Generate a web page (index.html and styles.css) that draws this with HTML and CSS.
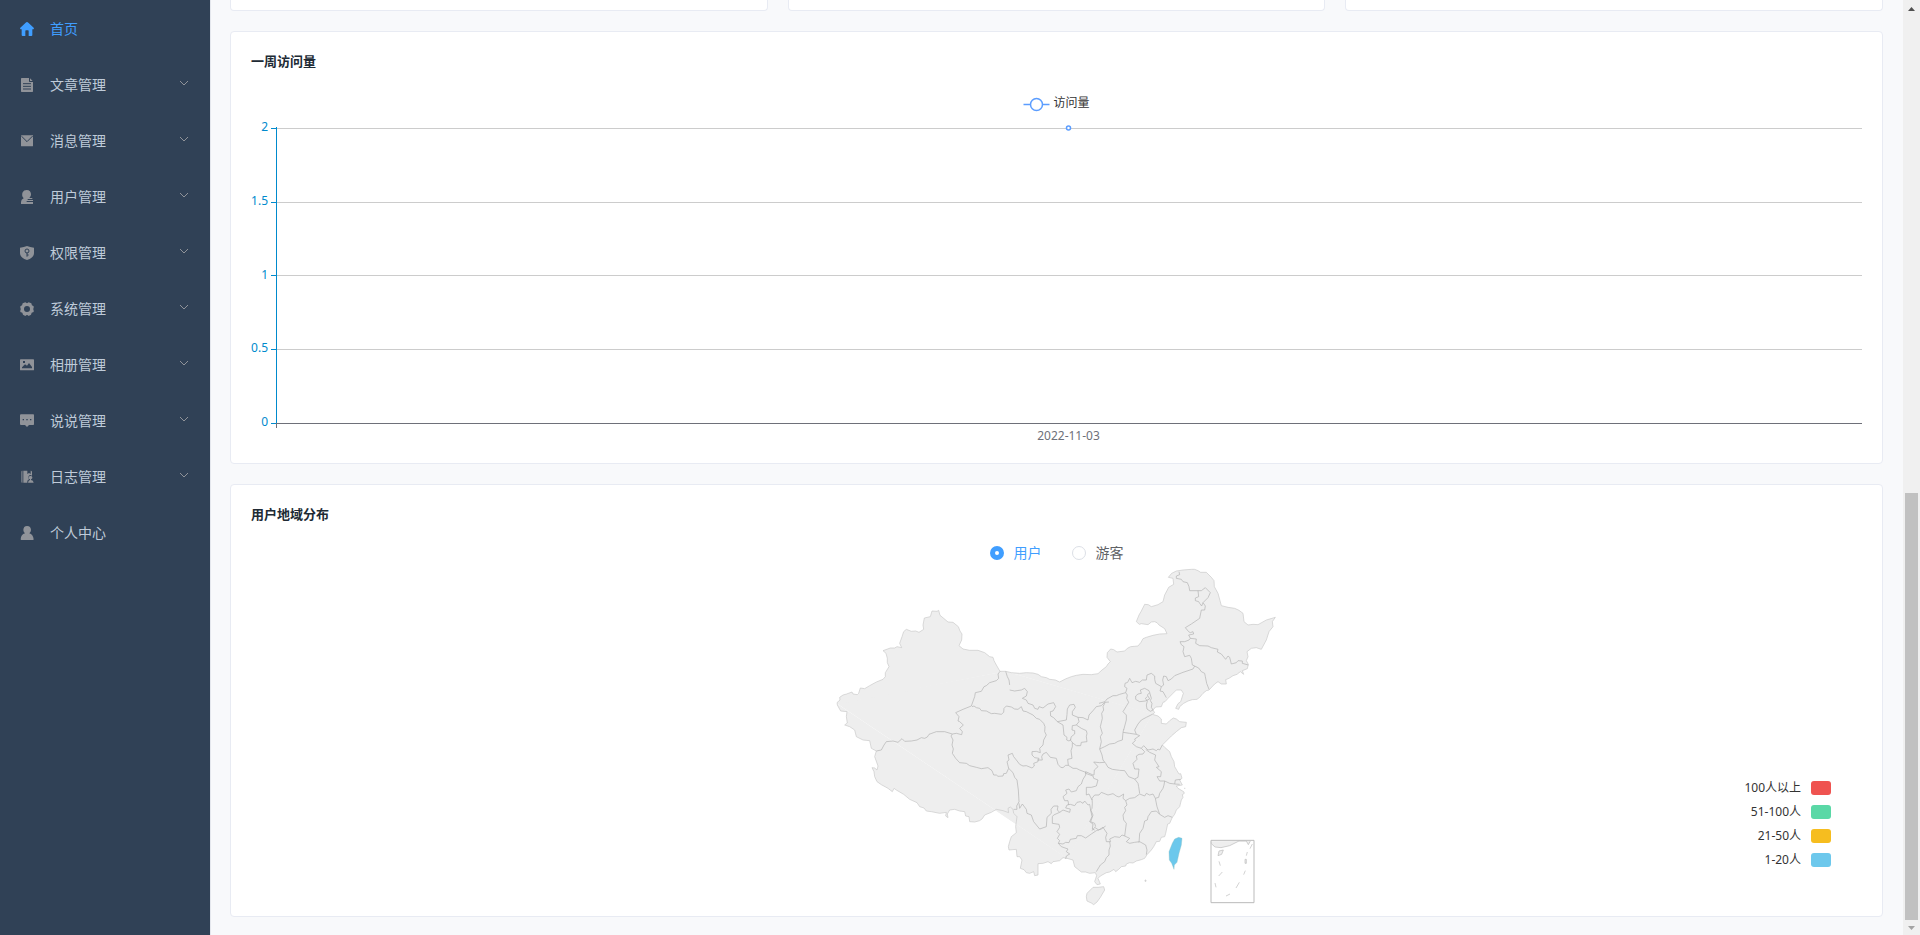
FILE: index.html
```html
<!DOCTYPE html>
<html lang="zh-CN">
<head>
<meta charset="utf-8">
<title>首页</title>
<link rel="stylesheet" href="styles.css">
</head>
<body>
<div class="app">
  <nav class="sidebar">
    <a class="item active" href="#"><svg class="icon" viewBox="0 0 42 42"><path d="M21 0Q23 0 25 2L41 17Q43 20 40 22H37V39Q37 42 34 42H26V27Q26 25 24 25H18Q16 25 16 27V42H8Q5 42 5 39V22H2Q-1 20 1 17L17 2Q19 0 21 0Z"/></svg><span>首页</span></a>
    <a class="item" href="#"><svg class="icon" viewBox="0 0 42 42"><path d="M5 0H27V10Q27 12 29 12H39V40Q39 42 37 42H5Q3 42 3 40V2Q3 0 5 0ZM30 1L38 9H30Z"/><path class="cut" d="M9 17H33M9 25H33M9 33H33"/></svg><span>文章管理</span><svg class="arrow" viewBox="0 0 10 6"><path d="M1 1L5 5L9 1"/></svg></a>
    <a class="item" href="#"><svg class="icon" viewBox="0 0 42 42"><path d="M3 4H39V35Q39 37 37 37H5Q3 37 3 35Z"/><path class="cut" d="M4 6L21 23L38 6"/></svg><span>消息管理</span><svg class="arrow" viewBox="0 0 10 6"><path d="M1 1L5 5L9 1"/></svg></a>
    <a class="item" href="#"><svg class="icon" viewBox="0 0 42 42"><path d="M20 0C29 0 33 6 33 13C33 18 30 22 28 24H37V27H24V30H39V33H21V36H39V42H3V36Q3 28 11 25C5 19 6 12 8 7Q11 0 20 0Z"/><path class="cut" d="M23 28.5H39M20 34.5H39"/></svg><span>用户管理</span><svg class="arrow" viewBox="0 0 10 6"><path d="M1 1L5 5L9 1"/></svg></a>
    <a class="item" href="#"><svg class="icon" viewBox="0 0 42 42"><path d="M21 0Q30 4 42 5V22Q41 36 21 42Q1 36 0 22V5Q12 4 21 0Z"/><circle class="cut" cx="21" cy="15" r="6"/><path class="cut" d="M21 20V32M21 27H26"/></svg><span>权限管理</span><svg class="arrow" viewBox="0 0 10 6"><path d="M1 1L5 5L9 1"/></svg></a>
    <a class="item" href="#"><svg class="icon" viewBox="0 0 42 42"><path fill-rule="evenodd" d="M16 1Q21 6 26 1L34 4Q34 11 41 13V18Q38 21 41 25V30Q33 31 33 38L26 42Q21 36 16 42L9 38Q9 31 1 30V25Q4 21 1 18V13Q8 11 8 4ZM21 12A9 9 0 1 0 21 30A9 9 0 1 0 21 12Z"/></svg><span>系统管理</span><svg class="arrow" viewBox="0 0 10 6"><path d="M1 1L5 5L9 1"/></svg></a>
    <a class="item" href="#"><svg class="icon" viewBox="0 0 42 42"><path fill-rule="evenodd" d="M2 4H40Q42 4 42 6V35Q42 37 40 37H2Q0 37 0 35V6Q0 4 2 4ZM6 31H36V27L27 15L21 23L15 19L6 28ZM9 9V15H15V9Z"/></svg><span>相册管理</span><svg class="arrow" viewBox="0 0 10 6"><path d="M1 1L5 5L9 1"/></svg></a>
    <a class="item" href="#"><svg class="icon" viewBox="0 0 42 42"><path fill-rule="evenodd" d="M3 1H40Q42 1 42 4V30Q42 33 40 33H27L21 39L15 33H3Q0 33 0 30V4Q0 1 3 1ZM8 15V19H12V15ZM19 15V19H23V15ZM30 15V19H34V15Z"/></svg><span>说说管理</span><svg class="arrow" viewBox="0 0 10 6"><path d="M1 1L5 5L9 1"/></svg></a>
    <a class="item" href="#"><svg class="icon" viewBox="0 0 42 42"><path class="dim" d="M6 2H8V38H6Q3 38 3 35V5Q3 2 6 2Z"/><path d="M10 2H22V12L27 9L32 12V2Q36 2 36 6V17Q30 13 26 18Q23 24 27 28L22 32V38H10Z"/><path d="M31 18A5 5 0 0 1 33 28V30Q40 31 41 38H24Q25 31 30 30V28A5 5 0 0 1 31 18Z"/></svg><span>日志管理</span><svg class="arrow" viewBox="0 0 10 6"><path d="M1 1L5 5L9 1"/></svg></a>
    <a class="item" href="#"><svg class="icon" viewBox="0 0 42 42"><path d="M21 0C29 0 33 5 33 12Q33 17 28 22Q39 25 41 40Q41 42 39 42H4Q2 42 2 40Q3 25 15 22Q10 17 10 12C10 5 14 0 21 0Z"/></svg><span>个人中心</span></a>
  </nav>

  <main class="content">
    <div class="row">
      <section class="card stub"></section>
      <section class="card stub"></section>
      <section class="card stub"></section>
    </div>

    <section class="card">
      <h2 class="title">一周访问量</h2>
      <svg class="chart" role="img" aria-label="一周访问量">
        <svg x="50%" y="0" overflow="visible">
          <path class="series" d="M-33 10.5H-7"/>
          <circle class="series" cx="-20" cy="10.5" r="6"/>
          <text class="legend-text" x="-3" y="13">访问量</text>
        </svg>
        <g class="grid">
          <line x1="26" x2="100%" y1="34.5" y2="34.5"/>
          <line x1="26" x2="100%" y1="108.5" y2="108.5"/>
          <line x1="26" x2="100%" y1="181.5" y2="181.5"/>
          <line x1="26" x2="100%" y1="255.5" y2="255.5"/>
        </g>
        <path class="axis-y" d="M25.5 33V329M20 34.5H25M20 108.5H25M20 181.5H25M20 255.5H25M20 329.5H25"/>
        <line class="axis-x" x1="25" x2="100%" y1="329.5" y2="329.5"/>
        <line class="axis-x" x1="25.5" x2="25.5" y1="329" y2="334"/>
        <g class="labels-y">
          <text x="17" y="37">2</text>
          <text x="17" y="111">1.5</text>
          <text x="17" y="185">1</text>
          <text x="17" y="258">0.5</text>
          <text x="17" y="332">0</text>
        </g>
        <g transform="translate(12 0)">
          <text class="label-x" x="50%" y="346">2022-11-03</text>
          <circle class="series" cx="50%" cy="34" r="2"/>
        </g>
      </svg>
    </section>

    <section class="card region">
      <h2 class="title">用户地域分布</h2>
      <div class="radios">
        <label class="radio"><input type="radio" name="type" checked><span>用户</span></label>
        <label class="radio"><input type="radio" name="type"><span>游客</span></label>
      </div>
      <div class="map-row">
        <svg class="map" viewBox="4 75 1356 1029" role="img" aria-label="用户地域分布">
          <path class="base" d="M25 490L528 396L966 523L712 953Z"/>
          <g class="coast">
            <path transform="translate(-30 -30)" d="M53 522L52 518L61 510L60 502L70 495L81 492L97 486L100 492L113 494L117 490L122 474L135 476L150 467L170 456L190 448L197 440L197 428L208 410L203 398L203 385L199 370L190 362L212 354L225 354L232 350L246 353L240 340L247 320L252 305L260 298L275 304L288 303L298 307L312 298L310 285L314 264L332 260L337 243L352 244L357 241L361 256L372 265L385 276L400 277L416 290L421 303L427 312L426 330L418 347L430 357L450 361L475 361L495 368L510 380L520 382L523 392L530 405L541 424L558 424"/>
            <path transform="translate(510 -30)" d="M18 424L35 428L60 430L80 428L100 429L115 433L125 440L140 443L150 448L167 450L180 456L197 447L215 440L230 436L250 433L275 434L295 431L307 420L320 410L325 402L332 395L322 382L323 368L333 357L342 359L352 366L375 363L383 355L393 350L415 348L424 337L430 326L440 322L460 316L480 312L502 311L495 296L478 285L472 278L465 275L455 276L445 284L425 281L419 283L410 275L418 255L425 243L435 223L446 224L455 230L475 224L490 215L495 195L507 172L522 163L520 145L506 142L516 130L530 123L550 120L575 118L585 118L595 122L603 127L620 127L635 142L643 152L644 170L655 190L661 212L665 227L685 232L705 235L718 241L730 250L733 275L745 285L760 283L775 284L800 270L827 262L818 275L820 290L808 305L800 330L785 358L770 353L755 355L742 365L745 380L740 392L746 403L743 416L728 422L732 433L722 425L712 433L700 437L688 445L678 449L680 462L665 462L655 455L645 462L628 480L620 482L610 490L600 502L592 508L578 509L565 513L552 520L540 530L537 538L528 535L535 521L543 515L551 490L545 480L530 480L520 490L505 505L496 515L490 517L485 530L468 531L460 540L465 548L458 553"/>
            <path transform="translate(450 480)" d="M518 43L535 48L545 57L545 70L560 72L570 62L581 54L590 57L600 65L620 67L618 80L605 83L590 95L575 108L563 120L548 135L555 142L570 155L575 170L583 185L585 200L592 212L598 222L603 221L607 235L600 240L608 255L590 258L595 265L612 275L614 280L608 284L610 292L605 300L600 320L590 330L585 343L578 352L570 370L564 372L558 400L555 410L545 412L540 424L530 425L522 440L515 450L502 464L495 475L485 479L470 483L460 489L450 488L440 492L438 498L425 500L417 508L408 515L403 508L390 516L380 518L362 528L355 535L362 552L352 554L345 545L351 527L347 518L330 520L318 516L305 516L295 508L285 500L280 480L262 475"/>
            <path transform="translate(0 420)" d="M712 535L700 533L690 542L670 545L665 551L655 545L640 550L625 551L625 585L615 587L612 575L600 580L590 578L583 569L572 565L577 540L570 530L562 530L560 508L538 510L536 500L540 485L545 470L560 458L558 440L562 410L552 400L550 388L542 381L535 385L537 398L520 392L500 388L485 397L465 405L458 416L450 422L435 426L420 425L418 410L408 408L405 395L390 393L375 388L360 390L353 402L355 413L348 408L350 397L330 400L305 395L290 393L283 384L270 380L262 368L240 358L222 343L200 330L193 325L188 335L175 325L155 314L142 305L135 290L133 275L127 263L135 264L142 270L145 258L135 230L140 213L125 205L120 182L100 180L80 170L75 150L60 140L45 135L53 129L50 110L52 95L33 93L23 75L23 72"/>
            <path transform="translate(450 480)" d="M372 560L375 570L362 592L352 606L342 614L335 609L322 603L320 590L322 580L340 562L355 562ZM496 540h3v4h-3ZM613 265h4"/>
          </g>
          <g class="border" transform="translate(-30 -30)">
            <path d="M541 424L535 432L537 445L530 452L510 458L500 467L493 470L485 484L467 488L465 500L455 528L430 538L408 548L418 560L415 573L420 575L431 585L420 595L428 605L426 614L410 610L398 612"/>
          </g>
          <g class="border" transform="translate(510 -30)">
            <path d="M18 424L23 440L28 450L30 465"/>
            <path d="M298 520L316 515L322 507L340 497L350 497L360 493L378 488L382 475L375 470L376 460L384 457L390 445L397 458L408 454L420 457L428 450L440 450L442 435L455 430L465 438L465 448L468 460L485 470L492 465L489 450L492 438L500 440L505 452L515 447L525 437L550 427L580 417L585 408"/>
            <path d="M378 488L383 495L381 505L387 517L370 545L380 555L380 570L372 600"/>
            <path d="M485 470L481 483L490 485L500 503"/>
            <path d="M585 408L597 414L605 425L615 430L617 440L621 460L628 478"/>
            <path d="M585 408L578 405L575 385L570 376L555 380L550 365L553 350L545 344L541 335L555 335L568 330L572 325"/>
            <path d="M572 325L590 327L588 340L600 347L625 348L635 353L655 358L653 366L665 372L678 388L685 378L690 382L695 402L710 398L715 392L728 393L728 400L746 405"/>
            <path d="M572 325L567 315L582 312L580 305L572 308L567 305L557 293L575 282L600 265L605 240L615 240L617 228L610 218L625 203L632 188L617 173L605 182L570 182L568 170L563 158L550 155L545 148L530 145L530 138L540 134L538 125"/>
            <path d="M595 182L597 200L587 204L587 212L597 215L600 220L606 228L610 218"/>
            <path d="M408 498L415 492L425 490L422 480L435 475L448 482L450 488L443 495L450 507L437 513L420 515L408 508Z"/>
            <path d="M450 488L455 505L452 512L457 520L455 532L460 540L452 544L442 537L440 525L443 513L437 505L443 500"/>
          </g>
          <g class="border" transform="translate(0 420)">
            <path d="M368 162L345 155L320 155L298 163L293 171L285 175L275 173L262 180L245 183L225 184L217 176L205 187L190 183L170 185L163 195L155 210L140 213"/>
            <path d="M368 162L364 168L370 180L367 195L371 207L368 220L378 235L390 248L410 250L420 257L440 262L455 266L475 263L487 272L492 285L500 285L505 289L520 288L522 281L530 280L537 265"/>
            <path d="M537 265L550 278L555 292L562 300L566 330L568 365L561 378L562 388L552 388"/>
            <path d="M537 265L532 245L538 240L535 225L548 220L552 230L560 240L570 253L580 258L590 257L607 264L614 258L612 250L625 245L628 235L615 233L607 225L607 215L620 214L632 218L630 205L640 195L642 180L650 165L645 155L646 140L642 130L630 118L620 115L610 105L590 95L580 93L575 80L565 88L555 87L545 81L530 78L523 85L522 97L515 103L495 100L485 101L470 93L455 92L450 85L440 83L433 78L427 80"/>
            <path d="M622 240L638 240L636 230L640 222L650 217L662 232L680 235L685 253L693 262L700 263L708 256L716 256L730 265L740 265L750 270L768 277L768 285L760 298L755 312L745 320L740 332L725 336L718 327L708 330L712 340L700 350L705 362L715 362L717 375"/>
            <path d="M568 370L570 385L578 372L590 388L592 400L605 405L612 425L630 447L650 440L652 412L665 400L664 388L672 378L685 378L683 390L690 397L700 390L720 397L722 387L708 384L712 375L722 373L735 377L742 367L752 365L760 370L765 363L775 375L780 373L783 390L787 410L780 425L790 432L788 447L795 450"/>
            <path d="M690 397L672 405L668 410L668 430L688 433L690 442L682 455L690 463L683 475L690 482L686 490L700 492L708 487L718 488L722 478L740 475L743 467L755 467L768 474L785 462L800 452L815 447L828 438"/>
            <path d="M686 490L695 500L715 507L710 515L720 522L710 528L708 537"/>
            <path d="M540 30L555 33L575 30L585 25L593 35L590 48L578 55L590 60L595 70L610 75L615 85L625 88L628 80L640 84L655 72L672 68L678 80L670 93L662 95L663 108L672 113L683 125L700 135L703 165L712 172L711 180L718 183L725 178"/>
            <path d="M683 125L710 120L712 103L713 87L720 75L733 73L737 82L728 95L728 105L745 112L748 125L740 135L728 137L727 150L735 152L735 162L725 170L722 180L728 187L728 200L724 212L727 235L714 238L716 256"/>
            <path d="M740 135L755 145L770 152L772 160L770 170L772 185L755 187L753 197L740 197L728 188"/>
            <path d="M745 112L760 113L775 120L778 105L790 92L800 80L815 77L825 67L838 66"/>
          </g>
          <g class="border" transform="translate(450 480)">
            <path d="M376 8L370 20L372 30L366 40L368 55L362 80L368 100L362 110L365 125L360 147L375 140L390 132L405 130L415 124L428 120L430 97"/>
            <path d="M518 43L500 52L485 60L475 72L465 90L470 103L450 100L430 97L432 88"/>
            <path d="M470 103L480 107L465 117L467 122L458 130L470 140L485 145L492 137L505 150L520 147L530 152L535 147L540 150L548 135"/>
            <path d="M485 145L495 155L490 162L478 163L470 168L472 178L460 190L465 207L478 207L475 232L465 237L475 250L477 260L480 280"/>
            <path d="M465 237L447 230L435 212L420 211L398 208L385 202L378 190L370 180L367 165L360 147"/>
            <path d="M375 187L360 188L342 186L355 200L344 210L343 225L340 225L318 215L318 220L340 228L342 235L355 240L350 258L335 262L320 262L320 285L328 282L337 300"/>
            <path d="M337 295L345 285L358 285L365 277L385 285L400 281L410 288L418 291L432 282L430 295L438 302L450 295L465 293L480 282L495 288L500 280L510 285L520 282L527 295"/>
            <path d="M498 148L510 157L528 165L525 180L538 200L530 202L545 215L543 230L532 230L540 243L555 243L553 255L550 265L540 280L537 292L527 295L532 320L540 343L555 352L565 347L578 352"/>
            <path d="M555 243L570 250L585 252L587 240L603 238M585 252L600 253"/>
            <path d="M540 343L530 333L515 335L505 350L503 360L495 363L490 385L480 400L478 428"/>
            <path d="M438 302L442 315L435 322L438 332L430 345L432 360L440 370L435 408L427 405L420 412L405 410L390 417L393 425L380 425L378 412L382 400L370 382L357 390L345 382L337 392"/>
            <path d="M337 295L338 310L337 325L333 330L340 345L333 365L345 370L348 380"/>
            <path d="M435 408L450 415L440 425L450 430L465 427L480 425L498 435L502 450L500 464"/>
            <path d="M390 425L392 438L388 450L388 465L380 473L375 485L362 495L350 515"/>
          </g>
          <g transform="translate(450 480)">
            <path class="taiwan" d="M597 412L607 415L605 435L598 460L592 487L584 495L583 508L576 490L569 480L568 455L578 430L585 417Z"/>
            <path class="inset" d="M694 421H823V608H694Z"/>
            <path class="islands" d="M695 424V431L706 441L724 443L750 437L778 423H800L806 434L812 423M715 467L718 453L731 450L726 463ZM818 432L811 446M803 456L800 467M796 478H800V490H796ZM797 512L792 524M779 547L769 564M751 582L739 588M706 549L709 562M728 516L717 528M718 484L722 497"/>
          </g>
        </svg>
        <ul class="legend">
          <li>100人以上<i class="swatch red"></i></li>
          <li>51-100人<i class="swatch green"></i></li>
          <li>21-50人<i class="swatch yellow"></i></li>
          <li>1-20人<i class="swatch blue"></i></li>
        </ul>
      </div>
    </section>
  </main>

  <div class="scrollbar" aria-hidden="true">
    <svg class="scroll-arrow" viewBox="0 0 17 15"><path class="up" d="M5 11L8.500 7L12 11Z"/></svg>
    <div class="thumb"></div>
    <svg class="scroll-arrow" viewBox="0 0 17 15"><path class="down" d="M5 6H12L8.500 10Z"/></svg>
  </div>
</div>
</body>
</html>
```

FILE: styles.css
```css
* { box-sizing: border-box; }

body {
  margin: 0;
  font-family: "Noto Sans", "Noto Sans CJK SC", sans-serif;
  font-size: 14px;
  color: #303133;
}

.app {
  display: flex;
  height: 100vh;
  overflow: hidden;
  background: #f8f9fb;
}

.sidebar {
  flex: none;
  width: 210px;
  background: #304156;
}

.item {
  display: flex;
  align-items: center;
  height: 56px;
  padding: 0 21px 0 20px;
  color: #bfcbd9;
  text-decoration: none;
}

.item span { flex: 1; }

.icon {
  width: 14px;
  height: 14px;
  margin-top: 2px;
  margin-right: 16px;
  fill: #909399;
}

.icon .cut { fill: none; stroke: #304156; stroke-width: 3; }
.icon .dim { opacity: 0.6; }

.active { color: #409eff; }
.active .icon { fill: #409eff; }

.arrow {
  width: 10px;
  height: 6px;
  margin-bottom: 2px;
  fill: none;
  stroke: #909399;
}

.content {
  flex: 1;
  min-width: 0;
  display: flex;
  flex-direction: column;
  gap: 20px;
  padding: 0 20px 0 19px;
  border-left: 1px solid #e4e7ed;
}

.row {
  display: grid;
  grid-template-columns: repeat(3, 1fr);
  gap: 20px;
}

.card {
  padding: 20px;
  background: #fff;
  border: 1px solid #e8ebf3;
  border-radius: 4px;
}

.stub {
  height: 11px;
  padding: 0;
  border-top: 0;
  border-radius: 0 0 4px 4px;
}

.title {
  margin: 0;
  font-size: 13px;
  line-height: 18px;
  font-weight: 700;
  color: #202a34;
}

.chart {
  display: block;
  width: 100%;
  height: 349px;
  margin-top: 24px;
  font-size: 12px;
}

.series { fill: #fff; stroke: #5b9dff; stroke-width: 1.5; }
.legend-text { fill: #333; }
.grid { stroke: #ccc; }
.axis-y { fill: none; stroke: #008acd; }
.axis-x { stroke: #6e7079; }
.labels-y { fill: #008acd; text-anchor: end; }
.label-x { fill: #6e7079; text-anchor: middle; }

.region { padding-bottom: 8px; }

.radios {
  display: flex;
  justify-content: center;
  gap: 30px;
  margin-top: 20px;
  line-height: 20px;
}

.radio {
  display: flex;
  align-items: center;
  gap: 10px;
  color: #606266;
}

.radio input {
  appearance: none;
  width: 14px;
  height: 14px;
  margin: 0;
  border: 1px solid #dcdfe6;
  border-radius: 50%;
  background: #fff;
}

.radio input:checked { border: 5px solid #409eff; }
.radio input:checked + span { color: #409eff; }

.map-row {
  display: grid;
  grid-template-columns: 1fr 452px 1fr;
  margin-top: 2px;
}

.map {
  grid-column: 2;
  display: block;
  width: 100%;
  stroke-linejoin: round;
}

.base { fill: #eee; stroke: #eee; stroke-width: 4; }
.coast { fill: #eee; stroke: #c8c8c8; stroke-width: 2; }
.border { fill: none; stroke: #b0b0b0; stroke-width: 2; }
.taiwan { fill: #6cc8ec; stroke: #8bb; stroke-width: 1; }
.inset { fill: none; stroke: #bbb; stroke-width: 3; }
.islands { fill: #eee; stroke: #bbb; stroke-width: 2; }

.legend {
  justify-self: end;
  align-self: end;
  display: grid;
  gap: 10px;
  margin: 0 31px 41px 0;
  padding: 0;
  list-style: none;
  font-size: 12px;
  line-height: 14px;
  color: #333;
}

.legend li {
  display: flex;
  justify-content: flex-end;
  gap: 10px;
}

.swatch {
  width: 20px;
  height: 14px;
  border-radius: 3px;
}

.red { background: #ef5350; }
.green { background: #5ad8a6; }
.yellow { background: #f6bd1f; }
.blue { background: #6dc8ec; }

.scrollbar {
  flex: none;
  display: flex;
  flex-direction: column;
  align-items: center;
  width: 17px;
  background: #f0f0f0;
}

.scroll-arrow { flex: none; width: 17px; height: 15px; }
.up { fill: #505050; }
.down { fill: #a3a3a3; }

.thumb {
  width: 13px;
  height: 45.7%;
  margin-top: auto;
  background: #c1c1c1;
}
```
